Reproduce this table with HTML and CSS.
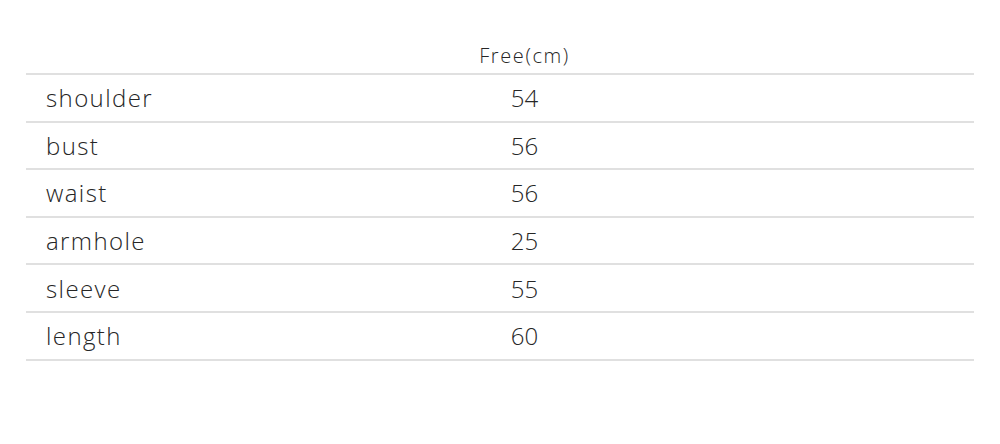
FILE: index.html
```html
<!DOCTYPE html>
<html>
<head>
<meta charset="utf-8">
<link rel="stylesheet" href="styles.css">
</head>
<body>
<div class="page">
  <div class="table">
    <div class="row head">
      <div class="cell label"></div>
      <div class="cell value">Free(cm)</div>
      <div class="cell"></div>
    </div>
    <div class="row">
      <div class="cell label">shoulder</div>
      <div class="cell value">54</div>
      <div class="cell"></div>
    </div>
    <div class="row">
      <div class="cell label">bust</div>
      <div class="cell value">56</div>
      <div class="cell"></div>
    </div>
    <div class="row">
      <div class="cell label">waist</div>
      <div class="cell value">56</div>
      <div class="cell"></div>
    </div>
    <div class="row">
      <div class="cell label">armhole</div>
      <div class="cell value">25</div>
      <div class="cell"></div>
    </div>
    <div class="row">
      <div class="cell label">sleeve</div>
      <div class="cell value">55</div>
      <div class="cell"></div>
    </div>
    <div class="row">
      <div class="cell label">length</div>
      <div class="cell value">60</div>
      <div class="cell"></div>
    </div>
  </div>
</div>
</body>
</html>
```

FILE: styles.css
```css
html, body {
  margin: 0;
  padding: 0;
  background: #ffffff;
}
body {
  width: 1000px;
  height: 444px;
  overflow: hidden;
  font-family: "Open Sans", Lato, sans-serif;
  font-weight: 300;
  color: #262626;
}
.page {
  padding: 35px 26px 0 26px;
}
.table {
  display: flex;
  flex-direction: column;
}
.row {
  display: grid;
  grid-template-columns: 374px 249px 1fr;
  height: 45.6px;
  border-bottom: 2px solid #e0e0e0;
  align-items: center;
  font-size: 24px;
}
.row.head {
  height: 38px;
  font-size: 20px;
}
.row.head .cell {
  padding-top: 2px;
}
.row.head .cell.value {
  letter-spacing: 1.6px;
}
.cell.label {
  padding-left: 20px;
  letter-spacing: 1.4px;
}
.cell.value {
  text-align: center;
}
```
